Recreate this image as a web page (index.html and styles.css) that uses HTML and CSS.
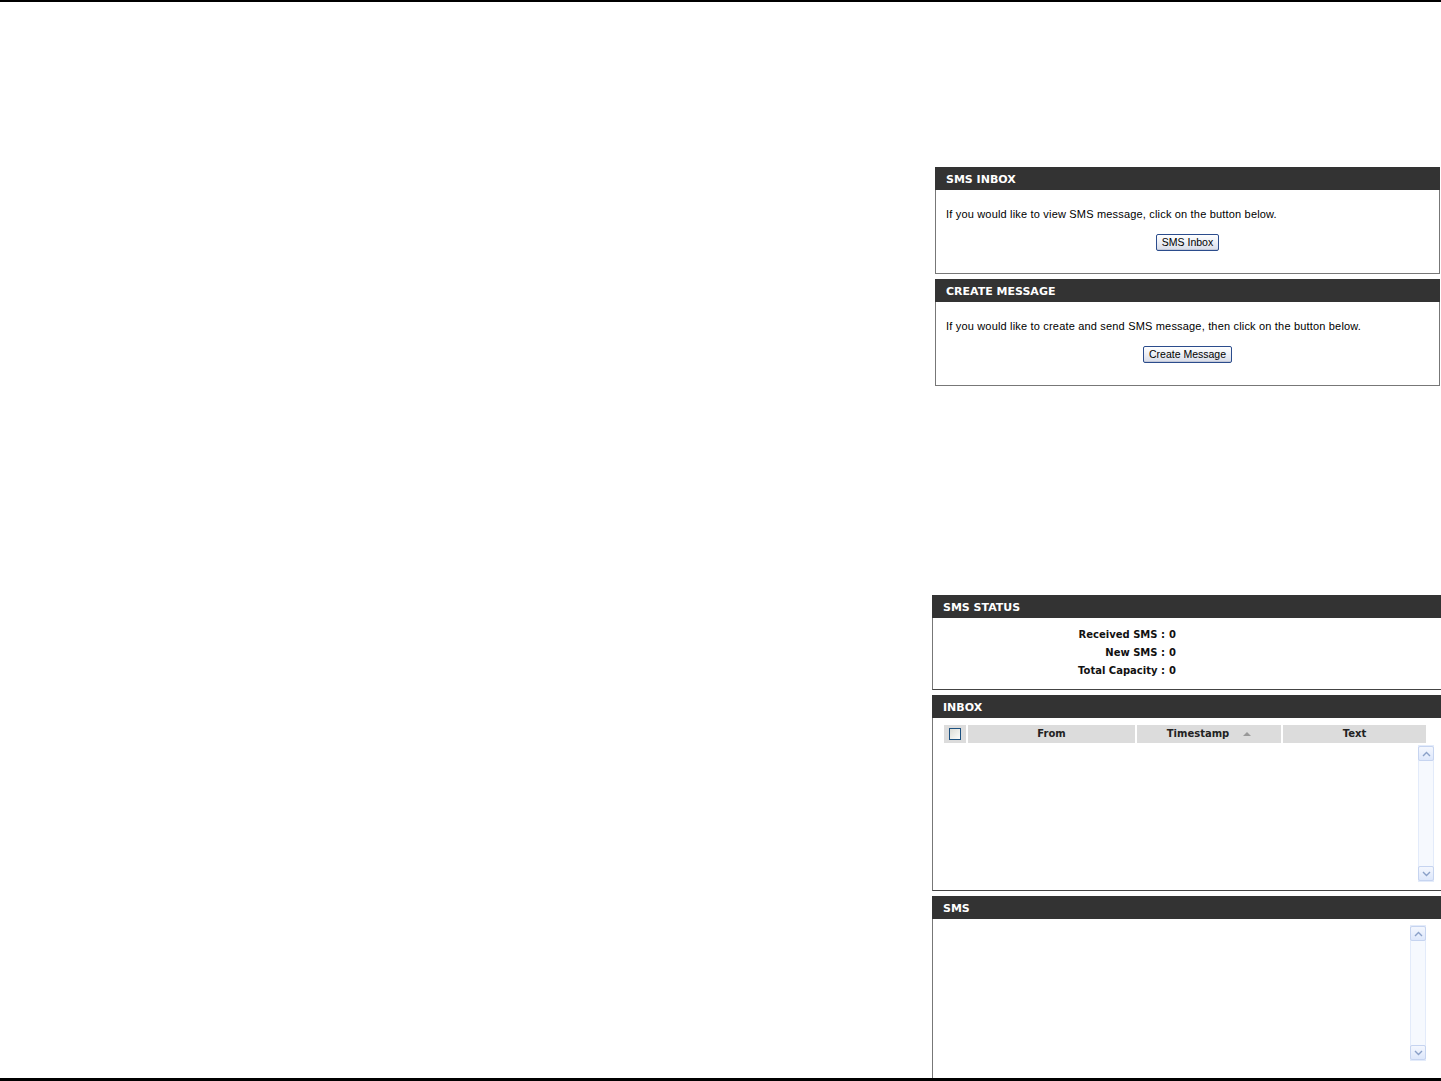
FILE: index.html
```html
<!DOCTYPE html>
<html lang="en">

<head>
  <meta charset="UTF-8">
  <meta name="viewport" content="width=device-width, initial-scale=1.0">
  <title>SMS</title>
  <link rel="stylesheet" href="styles.css">
</head>

<body>
  <div class="sheet">
    <div class="group upper">
      <div class="panel">
        <div class="panel-head">SMS INBOX</div>
        <div class="panel-body intro">
          <p>If you would like to view SMS message, click on the button below.</p>
          <button class="btn">SMS Inbox</button>
        </div>
      </div>
      <div class="panel">
        <div class="panel-head">CREATE MESSAGE</div>
        <div class="panel-body intro">
          <p>If you would like to create and send SMS message, then click on the button below.</p>
          <button class="btn">Create Message</button>
        </div>
      </div>
    </div>

    <div class="group lower">
      <div class="panel open">
        <div class="panel-head">SMS STATUS</div>
        <div class="panel-body status">
          <span class="label">Received SMS :</span><span>0</span>
          <span class="label">New SMS :</span><span>0</span>
          <span class="label">Total Capacity :</span><span>0</span>
        </div>
      </div>

      <div class="panel open">
        <div class="panel-head">INBOX</div>
        <div class="panel-body inbox">
          <div class="grid-head">
            <div class="cell"><span class="check"></span></div>
            <div class="cell">From</div>
            <div class="cell">Timestamp <span class="sort"></span></div>
            <div class="cell">Text</div>
          </div>
          <div class="list">
            <div class="scrollbar">
              <span class="arrow up"><svg width="9" height="6" viewBox="0 0 9 6"><path d="M1 5 L4.5 1.5 L8 5" fill="none" stroke="#8aa0c8" stroke-width="1.4"/></svg></span>
              <span class="arrow down"><svg width="9" height="6" viewBox="0 0 9 6"><path d="M1 1 L4.5 4.5 L8 1" fill="none" stroke="#8aa0c8" stroke-width="1.4"/></svg></span>
            </div>
          </div>
        </div>
      </div>

      <div class="panel open last">
        <div class="panel-head">SMS</div>
        <div class="panel-body reader">
          <div class="scrollbar">
            <span class="arrow up"><svg width="9" height="6" viewBox="0 0 9 6"><path d="M1 5 L4.5 1.5 L8 5" fill="none" stroke="#8aa0c8" stroke-width="1.4"/></svg></span>
            <span class="arrow down"><svg width="9" height="6" viewBox="0 0 9 6"><path d="M1 1 L4.5 4.5 L8 1" fill="none" stroke="#8aa0c8" stroke-width="1.4"/></svg></span>
          </div>
        </div>
      </div>
    </div>
  </div>
</body>

</html>
```

FILE: styles.css
```css
html,
body {
  margin: 0;
  padding: 0;
  background: #FFF;
  font-family: "Liberation Sans", Arial, sans-serif;
  font-size: 11px;
  color: #000;
  overflow: hidden;
}

* {
  box-sizing: border-box;
}

.sheet {
  height: 1081px;
  border-top: 2px solid #000;
  border-bottom: 3px solid #000;
  display: flex;
  flex-direction: column;
  overflow: hidden;
}

.group {
  display: flex;
  flex-direction: column;
  gap: 5px;
}

.upper {
  margin: 165px 0 0 935px;
  width: 505px;
}

.lower {
  margin: 209px 0 0 932px;
  flex: 1;
}

.panel {
  border: 1px solid #777;
  border-top: none;
}

.panel.open {
  border-right: none;
  border-bottom-color: #444;
}

.panel.last {
  flex: 1;
  border-bottom: none;
  display: flex;
  flex-direction: column;
}

.panel-head {
  height: 23px;
  margin: 0 -1px 0 -1px;
  padding: 5px 0 0 11px;
  background: #333;
  color: #FFF;
  font-family: "DejaVu Sans", Verdana, sans-serif;
  font-weight: bold;
  font-size: 11px;
  line-height: 16px;
}

.panel.open .panel-head {
  margin-right: 0;
}

.intro {
  height: 83px;
  padding: 17px 10px 0;
  text-align: center;
}

.intro p {
  margin: 0;
  line-height: 14px;
  letter-spacing: 0.18px;
  text-align: left;
}

.btn {
  margin-top: 13px;
  height: 17px;
  padding: 0 5px;
  font-family: "Liberation Sans", Arial, sans-serif;
  font-size: 10.5px;
  line-height: 15px;
  color: #000;
  border: 1px solid #2b4c8c;
  border-radius: 2px;
  background: linear-gradient(#fff, #eef0f6 45%, #d8dce8);
  box-shadow: inset 0 -1px 0 #c3c8d8;
}

.status {
  height: 71px;
  padding-top: 8px;
  display: grid;
  grid-template-columns: 232px auto;
  column-gap: 4px;
  align-content: start;
  font-family: "DejaVu Sans", Verdana, sans-serif;
  font-weight: bold;
  font-size: 10px;
  line-height: 18px;
  color: #111;
}

.status .label {
  text-align: right;
}

.inbox {
  height: 172px;
  padding: 7px 0 0 11px;
}

.grid-head {
  display: grid;
  grid-template-columns: 22px 167px 144px 143px;
  column-gap: 2px;
  height: 18px;
}

.grid-head .cell {
  background: #dcdcdc;
  font-family: "DejaVu Sans", Verdana, sans-serif;
  font-weight: bold;
  font-size: 10px;
  line-height: 18px;
  color: #222;
  text-align: center;
  display: flex;
  align-items: center;
  justify-content: center;
}

.check {
  display: inline-block;
  width: 12px;
  height: 12px;
  border: 1px solid #1c5180;
  background: linear-gradient(135deg, #dcdcd6, #fdfdfb);
}

.sort {
  display: inline-block;
  margin-left: 14px;
  width: 0;
  height: 0;
  border-left: 4px solid transparent;
  border-right: 4px solid transparent;
  border-bottom: 4px solid #999;
}

.list {
  display: flex;
  justify-content: flex-end;
  padding: 2px 7px 0 0;
}

.reader {
  flex: 1;
  display: flex;
  justify-content: flex-end;
  padding: 6px 15px 0 0;
}

.scrollbar {
  width: 16px;
  height: 137px;
  border: 1px solid #e3ebfa;
  background: #f6f9fe;
  display: flex;
  flex-direction: column;
  justify-content: space-between;
}

.reader .scrollbar {
  height: 136px;
}

.arrow {
  height: 15px;
  margin: 0 -1px;
  border: 1px solid #c6d4f0;
  border-radius: 2px;
  background: linear-gradient(#f4f7fe, #dde7fb);
  display: flex;
  align-items: center;
  justify-content: center;
}
```
